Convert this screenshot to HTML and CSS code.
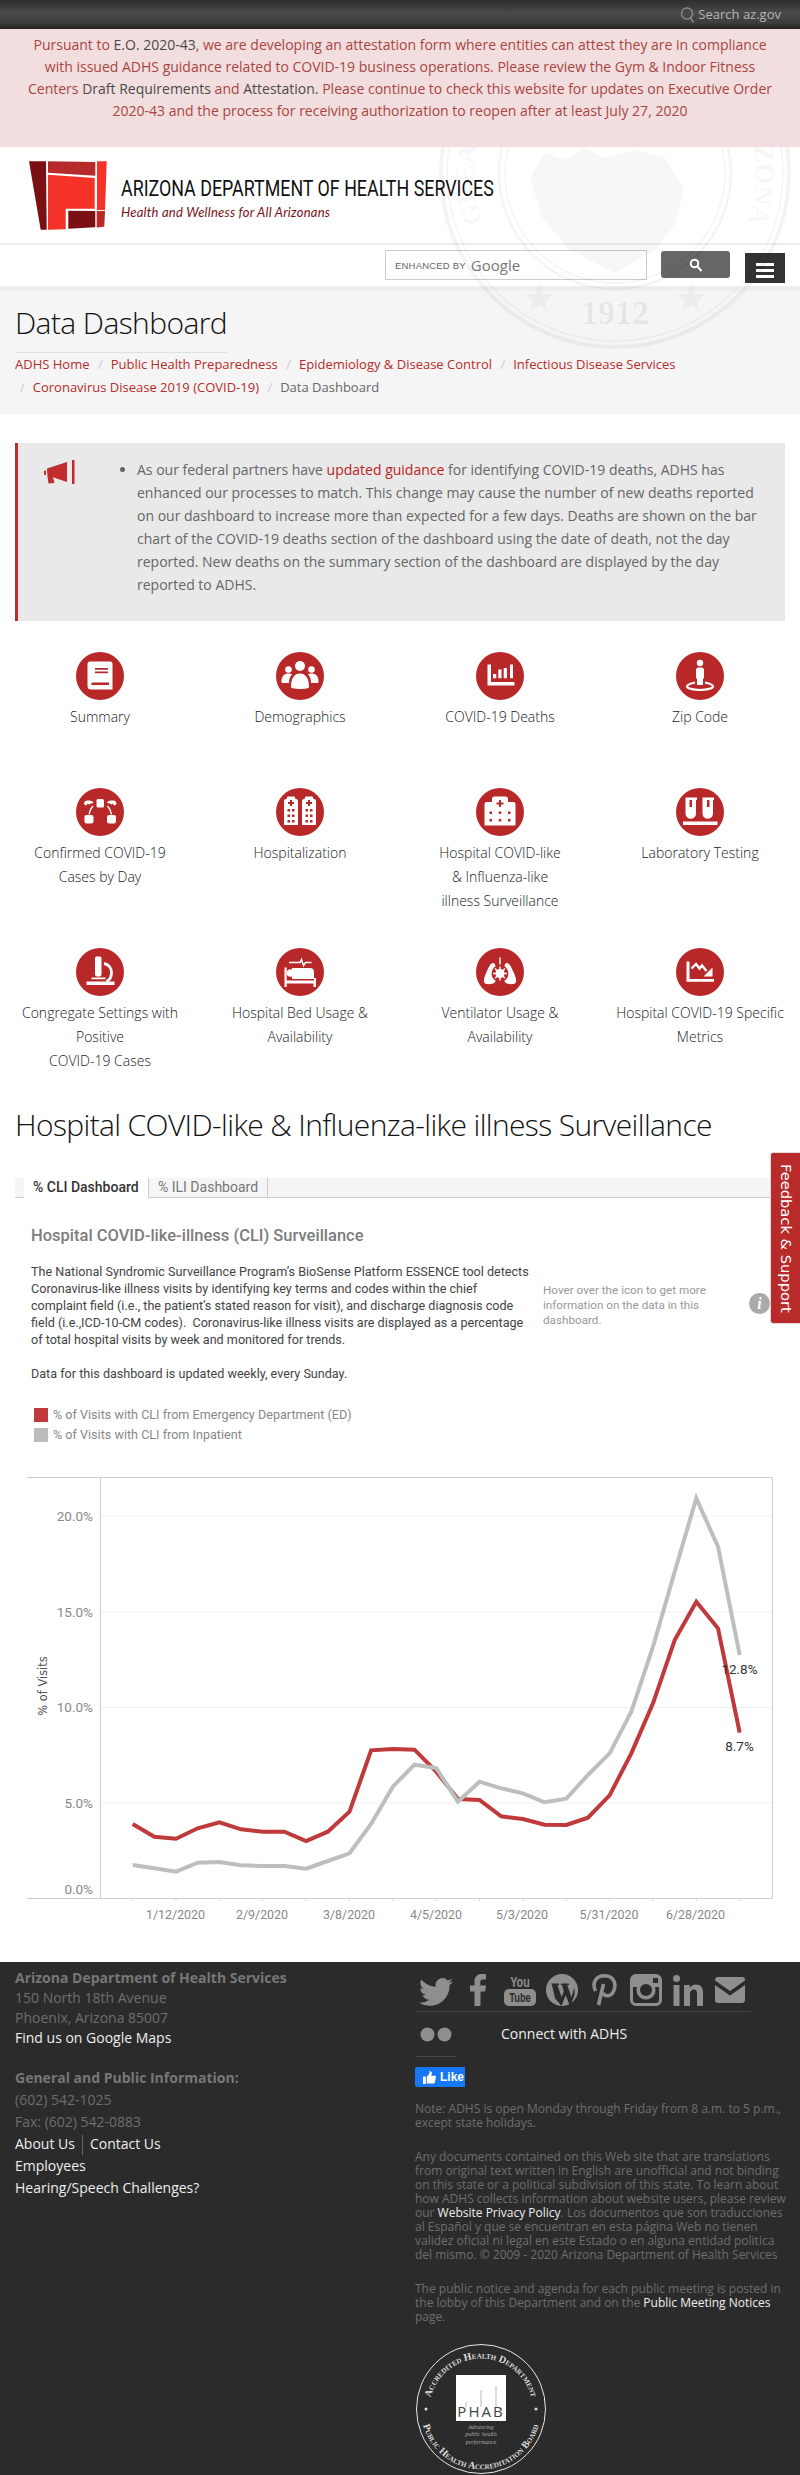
FILE: index.html
```html
<!DOCTYPE html>
<html lang="en">
<head>
<meta charset="utf-8">
<title>Data Dashboard</title>
<link rel="stylesheet" href="styles.css">
</head>
<body>
<div class="topbar">
  <a class="az-search">
    <svg class="az-icon" viewBox="0 0 15 16"><circle cx="7" cy="6.5" r="5.5"/><path d="M10.5 11l3 4.5"/></svg>
    Search az.gov
  </a>
</div>
<div class="alert">
  Pursuant to <span class="dk">E.O. 2020-43</span>, we are developing an attestation form where entities can attest they are in compliance with issued ADHS guidance related to COVID-19 business operations. Please review the Gym &amp; Indoor Fitness Centers <span class="dk">Draft Requirements</span> and <span class="dk">Attestation.</span> Please continue to check this website for updates on Executive Order 2020-43 and the process for receiving authorization to reopen after at least July 27, 2020
</div>
<header class="head">
  <svg class="seal" viewBox="0 0 370 370" aria-hidden="true">
    <circle cx="185" cy="185" r="174" class="seal-line w3"/>
    <circle cx="185" cy="185" r="168" class="seal-line"/>
    <circle cx="185" cy="185" r="116" class="seal-line w2"/>
    <circle cx="185" cy="185" r="110" class="seal-line"/>
    <path class="seal-fill" d="M100 190 115 165 135 172 155 160 175 170 205 162 235 170 254 200 246 235 225 262 185 285 140 262 112 230z"/>
    <path id="sealarc" class="seal-none" d="M85.300 284.700A141 141 0 1 1 284.700 284.700"/>
    <text class="seal-text"><textPath href="#sealarc" startOffset="50%" text-anchor="middle">GREAT SEAL OF THE STATE OF ARIZONA</textPath></text>
    <text x="185" y="336" text-anchor="middle" class="seal-year">1912</text>
    <path class="seal-fill" d="M109 295l4 11h11l-9 7 3 11-9-7-9 7 3-11-9-7h11zM261 295l4 11h11l-9 7 3 11-9-7-9 7 3-11-9-7h11z"/>
  </svg>
  <div class="brand">
    <svg class="logo" viewBox="29 161 78 70">
      <path fill="#7a1013" d="M29 161.300h17l.7 68.400h-6z"/>
      <path fill="#b62a2a" d="M48 161.300l47.300.7v13.700L48 172.700z"/>
      <path fill="#f43228" d="M97 161.300h9.700L105 210h-8z"/>
      <path fill="#f43228" d="M48 174.700l46.700 3.300v30.700H65.700v20.600L48 229.700z"/>
      <path fill="#7a1013" d="M68.300 210.700l27 .3V227.300l-27 1.400z"/>
      <path fill="#b62a2a" d="M96.700 211h8.300l-.7 15.700-7.600.7z"/>
    </svg>
    <div class="brand-text">
      <div class="brand-name">ARIZONA DEPARTMENT OF HEALTH SERVICES</div>
      <div class="brand-tag">Health and Wellness for All Arizonans</div>
    </div>
  </div>
  <div class="searchrow">
    <div class="gsearch"><span class="enh">ENHANCED BY</span><span class="goog">Google</span></div>
    <button class="gbtn"><svg viewBox="0 0 14 14"><circle cx="5.500" cy="5.500" r="3.800"/><path d="M8.500 8.500l4 4.500"/></svg></button>
    <div class="burger"><i></i><i></i><i></i></div>
  </div>
  <div class="band"></div>
  <div class="titlebox">
    <h1>Data Dashboard</h1>
    <ol class="crumbs">
      <li><a>ADHS Home</a></li>
      <li><a>Public Health Preparedness</a></li>
      <li><a>Epidemiology &amp; Disease Control</a></li>
      <li><a>Infectious Disease Services</a></li>
      <li><a>Coronavirus Disease 2019 (COVID-19)</a></li>
      <li class="cur">Data Dashboard</li>
    </ol>
  </div>
</header>

<section class="notice">
  <svg class="mega" viewBox="0 0 31 24"><path d="M0 11l2-.8v5L0 14.500zM3 8.500 23 2v20L9 17.200 10.500 23l-6 .5-1-7z"/><rect x="28" y="0" width="2.500" height="24"/></svg>
  <ul>
    <li>As our federal partners have <a>updated guidance</a> for identifying COVID-19 deaths, ADHS has enhanced our processes to match. This change may cause the number of new deaths reported on our dashboard to increase more than expected for a few days. Deaths are shown on the bar chart of the COVID-19 deaths section of the dashboard using the date of death, not the day reported. New deaths on the summary section of the dashboard are displayed by the day reported to ADHS.</li>
  </ul>
</section>

<nav class="tiles">
  <a class="tile">
    <span class="disc"><svg viewBox="0 0 48 48"><path fill="#fff" d="M14 9.500h20a2.500 2.500 0 0 1 2.500 2.500v25.500H15a3.500 3.500 0 0 1-3.500-3.500V12a2.500 2.500 0 0 1 2.500-2.500z"/><path fill="#b92828" d="M19 16h13v1.800H19zM19 19.500h13v1.800H19zM15.500 30.500h17.500v2.500H15.500z"/></svg></span>
    <span class="lab">Summary</span>
  </a>
  <a class="tile">
    <span class="disc"><svg viewBox="0 0 48 48"><g fill="#fff"><circle cx="24" cy="14" r="5"/><circle cx="12.500" cy="17.500" r="3.300"/><circle cx="35.500" cy="17.500" r="3.300"/><path d="M5.500 29c0-5 3-7.500 7-7.500 1.500 0 2.500.3 3.500 1-2 2-3 4.500-3 8.500H7a1.500 1.500 0 0 1-1.500-2zM42.500 29c0-5-3-7.500-7-7.500-1.500 0-2.500.3-3.500 1 2 2 3 4.500 3 8.500h6a1.500 1.500 0 0 0 1.500-2zM15 35c0-9 3.500-13.500 9-13.500S33 26 33 35c0 1.200-4 2-9 2s-9-.8-9-2z"/></g></svg></span>
    <span class="lab">Demographics</span>
  </a>
  <a class="tile">
    <span class="disc"><svg viewBox="0 0 48 48"><path fill="#fff" d="M11.500 12.500h3.500v17.500H38.500v3.500h-27zM17 22h3.300v4.300H17zM22.300 17.500h3.200v8.800h-3.200zM27.700 16h3.200v10.300h-3.200zM34 12.500h3v13.800h-3z"/></svg></span>
    <span class="lab">COVID-19 Deaths</span>
  </a>
  <a class="tile">
    <span class="disc"><svg viewBox="0 0 48 48"><circle cx="24" cy="11" r="3.200" fill="#fff"/><path fill="#fff" d="M20 18a2.500 2.500 0 0 1 2.500-2.500h3A2.500 2.500 0 0 1 28 18v8.500h-1V33h-6v-6.500h-1z"/><path fill="none" stroke="#fff" stroke-width="2.200" d="M19 30.500c-5 1-8 2.300-8 4s5.500 3.500 13 3.500 13-1.700 13-3.500-3-3-8-4"/></svg></span>
    <span class="lab">Zip Code</span>
  </a>
  <a class="tile">
    <span class="disc"><svg viewBox="0 0 48 48"><g fill="#fff"><rect x="20.500" y="11" width="7.500" height="8.500" rx="1.500"/><path d="M8 15a3 3 0 0 1 3-2.500h2.500c2 0 3.500 1 4 2.500-2 0-3.500 1-4.500 1.500-.5-.5-1-.8-1.500-.7-.7.700-.5 1.500-1 1.700-1.500 0-2.500-1-2.500-2.500zM40.500 15a3 3 0 0 0-3-2.500H35c-2 0-3.500 1-4 2.500 2 0 3.500 1 4.500 1.500.5-.5 1-.8 1.500-.7.700.700.5 1.500 1 1.700 1.500 0 2.500-1 2.500-2.500z"/><rect x="8.500" y="27" width="9" height="8.500" rx="2"/><rect x="31" y="27" width="9" height="8.500" rx="2"/></g><path fill="none" stroke="#fff" stroke-width="1.500" d="M17 18c-2 2-3.500 5-4 8.500M31.500 18c2 2 3.500 5 4 8.500"/></svg></span>
    <span class="lab">Confirmed COVID-19<br>Cases by Day</span>
  </a>
  <a class="tile">
    <span class="disc"><svg viewBox="0 0 48 48"><path fill="#fff" d="M8 13a2 2 0 0 1 2-2h.5l1-2.500h7L19.500 11h.5a2 2 0 0 1 2 2v24H8zM26 13a2 2 0 0 1 2-2h.5l1-2.500h7l1 2.500h.5a2 2 0 0 1 2 2v24H26z"/><path fill="#b92828" d="M14 12h2v2h2v2h-2v2h-2v-2h-2v-2h2zM32 12h2v2h2v2h-2v2h-2v-2h-2v-2h2zM11.500 21h2.500v2.500h-2.500zM16 21h2.500v2.500H16zM11.500 26.500h2.500v2.500h-2.500zM16 26.500h2.500v2.500H16zM29.500 21H32v2.500h-2.500zM34 21h2.500v2.500H34zM29.500 26.500H32v2.500h-2.500zM34 26.500h2.500v2.500H34zM11.500 32h2.500v2.500h-2.500zM16 32h2.500v2.500H16zM29.500 32H32v2.500h-2.500zM34 32h2.500v2.500H34z"/></svg></span>
    <span class="lab">Hospitalization</span>
  </a>
  <a class="tile">
    <span class="disc"><svg viewBox="0 0 48 48"><path fill="#fff" d="M16 11a2.500 2.500 0 0 1 2.500-2.500h11A2.500 2.500 0 0 1 32 11v3h5.500a2 2 0 0 1 2 2v21.500h-31V16a2 2 0 0 1 2-2H16z"/><path fill="#b92828" d="M23 12h2v2.500h2.500v2H25V19h-2v-2.500h-2.500v-2H23zM13.500 23.500H16V26h-2.500zM22.800 23.500h2.500V26h-2.500zM32 23.500h2.500V26H32zM13.500 31H16v2.500h-2.500zM22.800 31h2.500v2.500h-2.500zM32 31h2.500v2.500H32z"/></svg></span>
    <span class="lab">Hospital COVID-like<br>&amp; Influenza-like<br>illness Surveillance</span>
  </a>
  <a class="tile">
    <span class="disc"><svg viewBox="0 0 48 48"><path fill="#fff" d="M9.500 9.500h11.500v2.500H20v13.500a5.200 5.200 0 0 1-10.500 0V12zM26.500 9.500H38v2.500h-1v13.500a5.200 5.200 0 0 1-10.500 0V12zM7 33.500h34.500V37H7z"/><path fill="#b92828" d="M13.500 12h2.500v7h-2.500zM31 12h2.500v7H31z"/></svg></span>
    <span class="lab">Laboratory Testing</span>
  </a>
  <a class="tile">
    <span class="disc"><svg viewBox="0 0 48 48"><path fill="#fff" d="M20.500 8.500h3.500a1.500 1.500 0 0 1 1.500 1.500v16.500a2 2 0 0 1-2 2h-2.500a2 2 0 0 1-2-2V10a1.500 1.500 0 0 1 1.500-1.500zM15.500 29.500h14v1.800h-14z"/><path fill="none" stroke="#fff" stroke-width="2.800" d="M28 15.500c4.500.8 7.500 4.500 7.500 9s-2 7.500-5 9"/><path fill="#fff" d="M10.500 33.500h28v3.500h-28z"/></svg></span>
    <span class="lab">Congregate Settings with<br>Positive<br>COVID-19 Cases</span>
  </a>
  <a class="tile">
    <span class="disc"><svg viewBox="0 0 48 48"><path fill="none" stroke="#fff" stroke-width="1.500" d="M13 14.500h11l1.500-3 2 6 2-3h6"/><path fill="#fff" d="M8.500 19.500h2.200v13h27.300v-1.500H16V20h18a4 4 0 0 1 4 4v6h2v9h-2.500v-3.500H10.700V39H8.500z"/><circle cx="14.500" cy="25" r="3.800" fill="#fff"/></svg></span>
    <span class="lab">Hospital Bed Usage &amp;<br>Availability</span>
  </a>
  <a class="tile">
    <span class="disc"><svg viewBox="0 0 48 48"><path fill="#fff" d="M23.300 9.500h1.400v7h-1.400zM17 15c1.500 0 2.500 1.500 2.500 3.500V33c0 1.500-2 2.700-4.500 3-3 .3-6.500.3-7-2-.5-3 1-7 3-11 1.500-3.500 3.500-8 6-8zM31 15c-1.500 0-2.500 1.500-2.500 3.500V33c0 1.500 2 2.700 4.500 3 3 .3 6.500.3 7-2 .5-3-1-7-3-11-1.500-3.500-3.500-8-6-8z"/><circle cx="24" cy="25.500" r="8.500" fill="#b92828"/><g fill="#fff"><circle cx="24" cy="25.500" r="4.500"/><path d="M23.300 18.500h1.400v14h-1.400zM17 24.800h14v1.400H17zM18.500 20.900l1-1 9.900 9.900-1 1zM28.500 19.900l1 1-9.900 9.900-1-1z"/></g></svg></span>
    <span class="lab">Ventilator Usage &amp;<br>Availability</span>
  </a>
  <a class="tile">
    <span class="disc"><svg viewBox="0 0 48 48"><path fill="#fff" d="M10.500 13.500h3v17.500h24.500v2.800H10.500z"/><path fill="none" stroke="#fff" stroke-width="2.400" d="M15.500 20.500l4.500-4.500 3.500 4.500 2.500-3 4.500 5.500"/><path fill="#fff" d="M36.500 19.500v9h-9z"/></svg></span>
    <span class="lab">Hospital COVID-19 Specific<br>Metrics</span>
  </a>
</nav>

<h2 class="section-title">Hospital COVID-like &amp; Influenza-like illness Surveillance</h2>

<section class="viz">
  <div class="tabs"><span class="tab on">% CLI Dashboard</span><span class="tab">% ILI Dashboard</span></div>
  <div class="vizhead">
    <h3>Hospital COVID-like-illness (CLI) Surveillance</h3>
    <div class="vizcols">
      <div class="vizdesc">
        <p>The National Syndromic Surveillance Program’s BioSense Platform ESSENCE tool detects Coronavirus-like illness visits by identifying key terms and codes within the chief complaint field (i.e., the patient’s stated reason for visit), and discharge diagnosis code field (i.e.,ICD-10-CM codes).&nbsp; Coronavirus-like illness visits are displayed as a percentage of total hospital visits by week and monitored for trends.</p>
        <p>Data for this dashboard is updated weekly, every Sunday.</p>
      </div>
      <div class="vizhint">Hover over the icon to get more information on the data in this dashboard.</div>
      <span class="info">i</span>
    </div>
    <ul class="legend">
      <li><i class="sw red"></i>% of Visits with CLI from Emergency Department (ED)</li>
      <li><i class="sw grey"></i>% of Visits with CLI from Inpatient</li>
    </ul>
  </div>
  <svg class="chart" viewBox="0 1460 800 502">
    <g class="grid">
      <path d="M100.500 1516H772M100.500 1612H772M100.500 1707.500H772M100.500 1803H772"/>
    </g>
    <path class="frame" d="M27 1477.500H772.500V1898.500H27M100.500 1477.500V1898.500"/>
    <path class="ticks" d="M132.700 1898.500v3M176 1898.500v3M219.400 1898.500v3M262.700 1898.500v3M306.100 1898.500v3M349.500 1898.500v3M392.800 1898.500v3M436.200 1898.500v3M479.500 1898.500v3M522.900 1898.500v3M566.300 1898.500v3M609.600 1898.500v3M653 1898.500v3M696.300 1898.500v3M739.700 1898.500v3"/>
    <polyline class="ln red" points="132.700,1824 154.300,1836.700 176,1838.700 197.700,1828.300 219.400,1822.300 241,1829.300 262.700,1831.700 284.400,1831.700 306.100,1841 327.800,1831.700 349.500,1811.700 371.100,1750.300 392.800,1749 414.500,1749.700 436.200,1771.700 457.900,1799 479.500,1800 501.200,1816.300 522.900,1819 544.600,1824.700 566.300,1825 587.900,1817.700 609.600,1795.300 631.300,1753.300 653,1703.300 674.700,1640 696.300,1601.700 718,1628.300 739.700,1732.700"/>
    <polyline class="ln grey" points="132.700,1865 154.300,1868.300 176,1871.700 197.700,1862.700 219.400,1862 241,1865.300 262.700,1866 284.400,1866 306.100,1868.700 327.800,1861 349.500,1853.300 371.100,1824 392.800,1786.700 414.500,1764.700 436.200,1768 457.900,1801.700 479.500,1781.700 501.200,1788.300 522.900,1793.300 544.600,1802.300 566.300,1798.700 587.900,1775 609.600,1753.300 631.300,1711.700 653,1646.700 674.700,1571.700 696.300,1498.300 718,1546.700 739.700,1655"/>
    <g class="yl">
      <text x="93" y="1520.500">20.0%</text><text x="93" y="1616.500">15.0%</text><text x="93" y="1711.500">10.0%</text><text x="93" y="1807.500">5.0%</text><text x="93" y="1893.500">0.0%</text>
    </g>
    <g class="xl">
      <text x="175.500" y="1918.500">1/12/2020</text><text x="262" y="1918.500">2/9/2020</text><text x="349" y="1918.500">3/8/2020</text><text x="436" y="1918.500">4/5/2020</text><text x="522" y="1918.500">5/3/2020</text><text x="609" y="1918.500">5/31/2020</text><text x="695.500" y="1918.500">6/28/2020</text>
    </g>
    <text class="yt" transform="translate(47 1686) rotate(-90)">% of Visits</text>
    <text class="val" x="739.500" y="1673.500">12.8%</text>
    <text class="val" x="739.500" y="1750.500">8.7%</text>
  </svg>
</section>

<a class="feedback">Feedback &amp; Support</a>

<footer class="foot">
  <div class="foot-l">
    <div class="addr">
      <strong>Arizona Department of Health Services</strong>
      <span>150 North 18th Avenue</span>
      <span>Phoenix, Arizona 85007</span>
      <a>Find us on Google Maps</a>
    </div>
    <div class="info-block">
      <strong>General and Public Information:</strong>
      <span>(602) 542-1025</span>
      <span>Fax: (602) 542-0883</span>
      <div><a>About Us</a><em class="pipe"></em><a>Contact Us</a></div>
      <a>Employees</a>
      <a>Hearing/Speech Challenges?</a>
    </div>
  </div>
  <div class="foot-r">
    <div class="socials">
      <svg class="s-tw" viewBox="0 0 24 24"><path d="M23.953 4.570a10 10 0 0 1-2.825.775 4.958 4.958 0 0 0 2.163-2.723c-.951.555-2.005.959-3.127 1.184a4.920 4.920 0 0 0-8.384 4.482C7.690 8.095 4.067 6.130 1.640 3.162a4.822 4.822 0 0 0-.666 2.475c0 1.710.870 3.213 2.188 4.096a4.904 4.904 0 0 1-2.228-.616v.060a4.923 4.923 0 0 0 3.946 4.827 4.996 4.996 0 0 1-2.212.085 4.936 4.936 0 0 0 4.604 3.417 9.867 9.867 0 0 1-6.102 2.105c-.390 0-.779-.023-1.170-.067a13.995 13.995 0 0 0 7.557 2.209c9.053 0 13.998-7.496 13.998-13.985 0-.210 0-.420-.015-.630A9.935 9.935 0 0 0 24 4.590z"/></svg>
      <svg class="s-fb" viewBox="0 0 16 32"><path d="M4.500 32V17.500H0V11.500h4.500V7.500C4.500 2.500 7.500 0 11.500 0c2 0 3.500.1 4.500.3v5.200h-3c-2.200 0-2.700 1-2.700 2.700v3.300H16l-.8 6h-4.700V32z"/></svg>
      <svg class="s-yt" viewBox="0 0 32 32"><text x="16" y="12.500" class="yt-you">You</text><rect x="0" y="15" width="32" height="17" rx="5"/><text x="16" y="28.500" class="yt-tube">Tube</text></svg>
      <svg class="s-wp" viewBox="0 0 32 32"><circle cx="16" cy="16" r="16"/><path class="cut" d="M5 9.500h8v1.500l-1.500.3 4.200 12 2-6-1.500-6-1.300-.3V9.500h8v1.500l-1.700.3 4.300 12 2.700-9.500c.6 3.500 1 7-1.500 12l-2.500 7-4.500-11.500L15.500 32 9 24.300 6 11z"/></svg>
      <svg class="s-pt" viewBox="0 0 25 32"><path fill="none" stroke-width="3.600" class="pt" d="M3.500 17C0 10 3 1.800 12.500 1.800c7.500 0 10.500 5 10.500 9.500 0 6-3.500 10.500-7.500 10.500-3 0-4.500-2-4-3.500M11.500 10l-5 21"/></svg>
      <svg class="s-ig" viewBox="0 0 32 32"><path fill-rule="evenodd" d="M6 0h20a6 6 0 0 1 6 6v20a6 6 0 0 1-6 6H6a6 6 0 0 1-6-6V6a6 6 0 0 1 6-6zM3 13v13a3 3 0 0 0 3 3h20a3 3 0 0 0 3-3V13h-4a9.500 9.500 0 1 1-18 0zM23 4v5h5V4zM16 10a6 6 0 1 0 0 12 6 6 0 0 0 0-12z"/></svg>
      <svg class="s-in" viewBox="0 0 30 31"><circle cx="3.500" cy="3.500" r="3.500"/><rect x=".5" y="10" width="6" height="21"/><path d="M11 10h5.800v3c1.200-2 3.400-3.500 6.200-3.500 5 0 7 3.200 7 8V31h-6V19c0-2.800-.8-4.500-3-4.500s-4 1.700-4 4.500v12h-6z"/></svg>
      <svg class="s-ml" viewBox="0 0 30 26"><path d="M3 0h24a3 3 0 0 1 3 3v.5L15 14 0 3.500V3a3 3 0 0 1 3-3zM0 8l15 10.500L30 8v15a3 3 0 0 1-3 3H3a3 3 0 0 1-3-3z"/></svg>
    </div>
    <div class="connect">
      <svg class="flickr" viewBox="0 0 32 15"><circle cx="7.500" cy="7.500" r="7"/><circle cx="24.500" cy="7.500" r="7"/></svg>
      <span>Connect with ADHS</span>
    </div>
    <hr class="short">
    <a class="like"><svg viewBox="0 0 14 14"><path d="M0 6h3v8H0zM4 6.500 7 2.500V0c1.500 0 2.500 1 2.500 2.500 0 1-.3 1.800-.6 2.500H13a1 1 0 0 1 1 1.200l-1.300 6.500a1 1 0 0 1-1 .8H4z"/></svg>Like</a>
    <p class="fine">Note: ADHS is open Monday through Friday from 8 a.m. to 5 p.m., except state holidays.</p>
    <p class="fine">Any documents contained on this Web site that are translations from original text written in English are unofficial and not binding on this state or a political subdivision of this state. To learn about how ADHS collects information about website users, please review our <a>Website Privacy Policy</a>. Los documentos que son traducciones al Español y que se encuentran en esta página Web no tienen validez oficial ni legal en este Estado o en alguna entidad politica del mismo. © 2009 - 2020 Arizona Department of Health Services</p>
    <p class="fine">The public notice and agenda for each public meeting is posted in the lobby of this Department and on the <a>Public Meeting Notices</a> page.</p>
    <svg class="phab" viewBox="0 0 132 132">
      <circle cx="66" cy="65" r="64.500" class="phab-ring"/>
      <path id="phabtop" class="phab-none" d="M14.300 72A52 52 0 1 1 117.700 72"/>
      <path id="phabbot" class="phab-none" d="M6.500 73A60 60 0 0 0 125.500 73"/>
      <text class="phab-arc"><textPath href="#phabtop" startOffset="50%" text-anchor="middle">Accredited Health Department</textPath></text>
      <text class="phab-arc"><textPath href="#phabbot" startOffset="50%" text-anchor="middle">Public Health Accreditation Board</textPath></text>
      <circle cx="11" cy="65" r="1.500" fill="#ddd"/><circle cx="121" cy="65" r="1.500" fill="#ddd"/>
      <rect x="41" y="31" width="50" height="46" fill="#fff"/>
      <path class="phab-bars" d="M51 63V58M66 63V46M81 63V42"/>
      <text x="66" y="73" class="phab-word">PHAB</text>
      <text x="66" y="85" class="phab-sub">Advancing</text>
      <text x="66" y="92" class="phab-sub">public health</text>
      <text x="66" y="100" class="phab-sub">performance</text>
    </svg>
  </div>
</footer>
</body>
</html>
```
FILE: styles.css
```css
* { box-sizing: border-box; }
html, body { margin: 0; padding: 0; }
body { font: 14px/22px "Open Sans", sans-serif; color: #333; background: #fff; position: relative; width: 800px; overflow-x: hidden; }
a { text-decoration: none; color: inherit; cursor: pointer; }
ul, ol { list-style: none; margin: 0; padding: 0; }

.topbar { height: 29px; background: linear-gradient(#2e2e2e, #4a4a4a 45%, #3c3c3c 80%, #222); display: flex; justify-content: flex-end; align-items: center; padding-right: 19px; }
.az-search { display: flex; align-items: center; gap: 3px; color: #b5b5b5; font-size: 13px; line-height: 29px; }
.az-icon { width: 15px; height: 16px; fill: none; stroke: #8a8a8a; stroke-width: 1.4; }

.alert { height: 118px; background: #f2dede; color: #a94442; padding: 5px 20px 0; text-align: center; line-height: 22px; }
.dk { color: #4a4a4a; }

.head { position: relative; overflow: hidden; }
.seal { position: absolute; left: 430px; top: -159px; width: 370px; height: 370px; pointer-events: none; z-index: 2; overflow: hidden; }
.seal-line { fill: none; stroke: rgba(0,0,0,.045); stroke-width: 1.5; }
.seal-line.w3 { stroke-width: 4; }
.seal-line.w2 { stroke-width: 2.5; }
.seal-fill { fill: rgba(0,0,0,.03); }
.seal-none { fill: none; }
.seal-text { font: bold 27px "Liberation Serif", serif; fill: rgba(0,0,0,.045); }
.seal-year { font: bold 34px "Liberation Serif", serif; fill: rgba(0,0,0,.06); }

.brand { height: 98px; border-bottom: 2px solid #eee; display: flex; align-items: flex-start; padding: 14px 0 0 29px; }
.logo { width: 78px; height: 70px; flex: none; }
.brand-text { margin-left: 14px; padding-top: 14px; }
.brand-name { font: 22px/28px "Roboto", sans-serif; color: #111; white-space: nowrap; transform: scaleX(.811); transform-origin: left center; }
.brand-tag { font: italic 13px/18px "Lato", sans-serif; color: #7a1013; white-space: nowrap; letter-spacing: .23px; }

.searchrow { height: 41px; display: flex; align-items: flex-start; justify-content: flex-end; padding: 5px 15px 0 0; }
.gsearch { width: 262px; height: 30px; border: 1px solid #ccc; background: #fff; display: flex; align-items: center; padding-left: 9px; gap: 5px; color: #666; }
.enh { font: 9.500px "Liberation Sans", sans-serif; letter-spacing: .2px; }
.goog { font: 15px "Open Sans", sans-serif; color: #777; }
.gbtn { width: 69px; height: 27px; margin: 1px 15px 0 14px; background: #666; border: 0; border-radius: 3px; padding: 0; display: flex; align-items: center; justify-content: center; }
.gbtn svg { width: 14px; height: 14px; fill: none; stroke: #fff; stroke-width: 2; }
.burger { width: 40px; height: 30px; margin-top: 3px; background: #333; display: flex; flex-direction: column; justify-content: flex-end; gap: 3px; padding: 0 11px 5px; }
.burger i { display: block; height: 3px; background: #fff; }
.band { height: 5px; background: #eee; }
.titlebox { height: 123px; background: #f5f5f5; border-bottom: 1px solid #eee; padding: 14px 15px 0; }
h1 { display: block; width: fit-content; margin: 0; font: 300 30px/36px "Open Sans", sans-serif; letter-spacing: -.6px; color: #111; border-bottom: 1px solid #e0e0e0; padding-bottom: 11px; }
.crumbs { line-height: 23px; font-size: 13px; }
.crumbs li { display: inline-block; color: #b92a2a; }
.crumbs li + li::before { content: "/"; color: #ccc; padding: 0 8px 0 5px; }
.crumbs .cur { color: #666; }

.notice { margin: 29px 15px 0; height: 178px; background: #e9e9e9; border-left: 3px solid #c12c2c; display: flex; padding: 15px 20px 0 26px; }
.mega { width: 31px; height: 24px; fill: #c12c2c; flex: none; margin-top: 2px; }
.notice ul { margin-left: 62px; list-style: disc; color: #666; line-height: 23px; }
.notice li a { color: #b92222; }

.tiles { display: grid; grid-template-columns: repeat(4, 200px); row-gap: 35px; margin-top: 31px; }
.tile { display: flex; flex-direction: column; align-items: center; padding: 0 10px; text-align: center; color: #333; }
.disc { width: 48px; height: 48px; border-radius: 50%; background: #b92828; margin-bottom: 5px; }
.disc svg { display: block; width: 48px; height: 48px; }
.lab { display: block; min-height: 48px; line-height: 24px; font-weight: 300; color: #222; white-space: nowrap; }

.section-title { margin: 27px 0 0; padding-left: 15px; font: 300 30px/50px "Open Sans", sans-serif; letter-spacing: -.63px; color: #111; }

.viz { margin: 28px 0 0; }
.tabs { margin-left: 15px; width: 755px; height: 20px; background: #f5f5f5; border-bottom: 1px solid #ccc; padding-left: 9px; display: flex; }
.tab { width: 119px; padding: 0 9px; font: 14px/19px "Roboto", sans-serif; color: #777; border-right: 1px solid #ccc; white-space: nowrap; }
.tab.on { background: #fff; color: #333; font-weight: 500; height: 20px; width: 125px; }
.vizhead { padding: 28px 0 0 31px; }
h3 { margin: 0; font: 500 16.500px/20px "Roboto", sans-serif; color: #7c7c7c; }
.vizcols { display: flex; margin-top: 17px; position: relative; height: 119px; }
.vizdesc { width: 501px; margin-right: 11px; font: 12.600px/17px "Roboto", sans-serif; color: #444; flex: none; }
.vizdesc p { margin: 0 0 17px; }
.vizhint { width: 175px; margin-top: 20px; font: 11.700px/15px "Roboto", sans-serif; color: #999; }
.info { position: absolute; left: 718px; top: 30px; width: 21px; height: 21px; border-radius: 50%; background: #aaa; color: #fff; font: italic bold 16px/21px "Liberation Serif", serif; text-align: center; }
.legend { margin: 23px 0 15px; font: 12.600px/20px "Roboto", sans-serif; color: #888; padding-left: 3px; }
.legend li { display: flex; align-items: center; gap: 5px; }
.sw { width: 14px; height: 14px; flex: none; }
.sw.red { background: #c0393b; }
.sw.grey { background: #bbbdbd; }
.chart { display: block; width: 800px; height: 502px; }
.grid path { stroke: #f0f0f0; fill: none; }
.frame { stroke: #ccc; fill: none; }
.ticks { stroke: #ddd; fill: none; }
.ln { fill: none; stroke-width: 4; stroke-linejoin: miter; }
.ln.red { stroke: #c0393b; }
.ln.grey { stroke: #bcbfbf; }
.yl text { font: 13.500px "Roboto", sans-serif; fill: #888; text-anchor: end; }
.xl text { font: 12.400px "Roboto", sans-serif; fill: #888; text-anchor: middle; }
.yt { font: 11.400px "DejaVu Sans", sans-serif; fill: #555; text-anchor: middle; }
.val { font: 13.500px "Roboto", sans-serif; fill: #333; text-anchor: middle; }

.feedback { position: absolute; right: 0; top: 1152px; width: 30px; height: 172px; background: #b92a2a; color: #fff; border: 1px solid #ddd; border-right: 0; border-radius: 3px 0 0 3px; writing-mode: vertical-rl; text-align: center; font: 14.700px/28px "DejaVu Sans", sans-serif; z-index: 5; }

.foot { height: 513px; background: #2b2b2b; color: #6e6e6e; display: flex; padding: 6px 0 0 15px; overflow: hidden; }
.foot-l { width: 400px; flex: none; }
.foot-l a, .fine a, .connect { color: #eee; }
.addr > *, .info-block > * { display: block; }
.addr { line-height: 20px; }
.info-block { margin-top: 19px; line-height: 22px; }
.foot strong { font-weight: 700; color: #777; }
.pipe { display: inline-block; width: 1px; height: 20px; background: #666; margin: 0 7px; vertical-align: middle; }
.foot-r { width: 372px; flex: none; padding-top: 6px; }
.socials { width: 336px; height: 38px; border-bottom: 1px solid #444; position: relative; }
.socials svg { position: absolute; fill: #8e8e8e; }
.s-tw { left: 4px; top: 1px; width: 34px; height: 34px; }
.s-fb { left: 55px; top: 0; width: 16px; height: 32px; }
.s-yt { left: 89px; top: 0; width: 32px; height: 32px; }
.yt-you { font: bold 15px "Liberation Sans", sans-serif; text-anchor: middle; transform-box: fill-box; transform-origin: center; transform: scaleX(.72); }
.yt-tube { font: bold 13px "Liberation Sans", sans-serif; text-anchor: middle; fill: #2b2b2b; transform-box: fill-box; transform-origin: center; transform: scaleX(.72); }
.s-wp { left: 131px; top: 0; width: 32px; height: 32px; }
.s-wp .cut { fill: #2b2b2b; }
.s-pt { left: 177px; top: 0; width: 25px; height: 32px; }
.pt { stroke: #8e8e8e; }
.socials .pt { fill: none; }
.s-ig { left: 215px; top: 0; width: 32px; height: 32px; }
.s-in { left: 258px; top: 1px; width: 30px; height: 31px; }
.s-ml { left: 300px; top: 3px; width: 30px; height: 26px; }
.connect { display: flex; align-items: center; height: 44px; padding-left: 5px; gap: 49px; }
.flickr { width: 32px; height: 15px; fill: #8e8e8e; }
.short { width: 42px; margin: 0; border: 0; border-top: 1px solid #444; height: 1px; }
.like { display: flex; align-items: center; gap: 4px; width: 50px; height: 20px; margin-top: 10px; background: #1877f2; color: #fff; border-radius: 2px 0 0 2px; padding-left: 8px; font: bold 12px "Liberation Sans", sans-serif; overflow: hidden; }
.like svg { width: 13px; height: 13px; fill: #fff; flex: none; }
.fine { margin: 15px 0 0; font-size: 12px; line-height: 14px; color: #6e6e6e; }
.fine + .fine { margin-top: 20px; }
.phab { display: block; width: 132px; height: 132px; margin-top: 20px; }
.phab-ring { fill: none; stroke: #e8e8e8; stroke-width: 1; }
.phab-none { fill: none; }
.phab-arc { font: bold 10px "Liberation Serif", serif; font-variant: small-caps; fill: #ddd; }
.phab-bars { stroke: #bbb; fill: none; }
.phab-word { font: 15px "Open Sans", sans-serif; fill: #444; text-anchor: middle; letter-spacing: 2px; }
.phab-sub { font: italic 6px "Liberation Serif", serif; fill: #aaa; text-anchor: middle; }
```
